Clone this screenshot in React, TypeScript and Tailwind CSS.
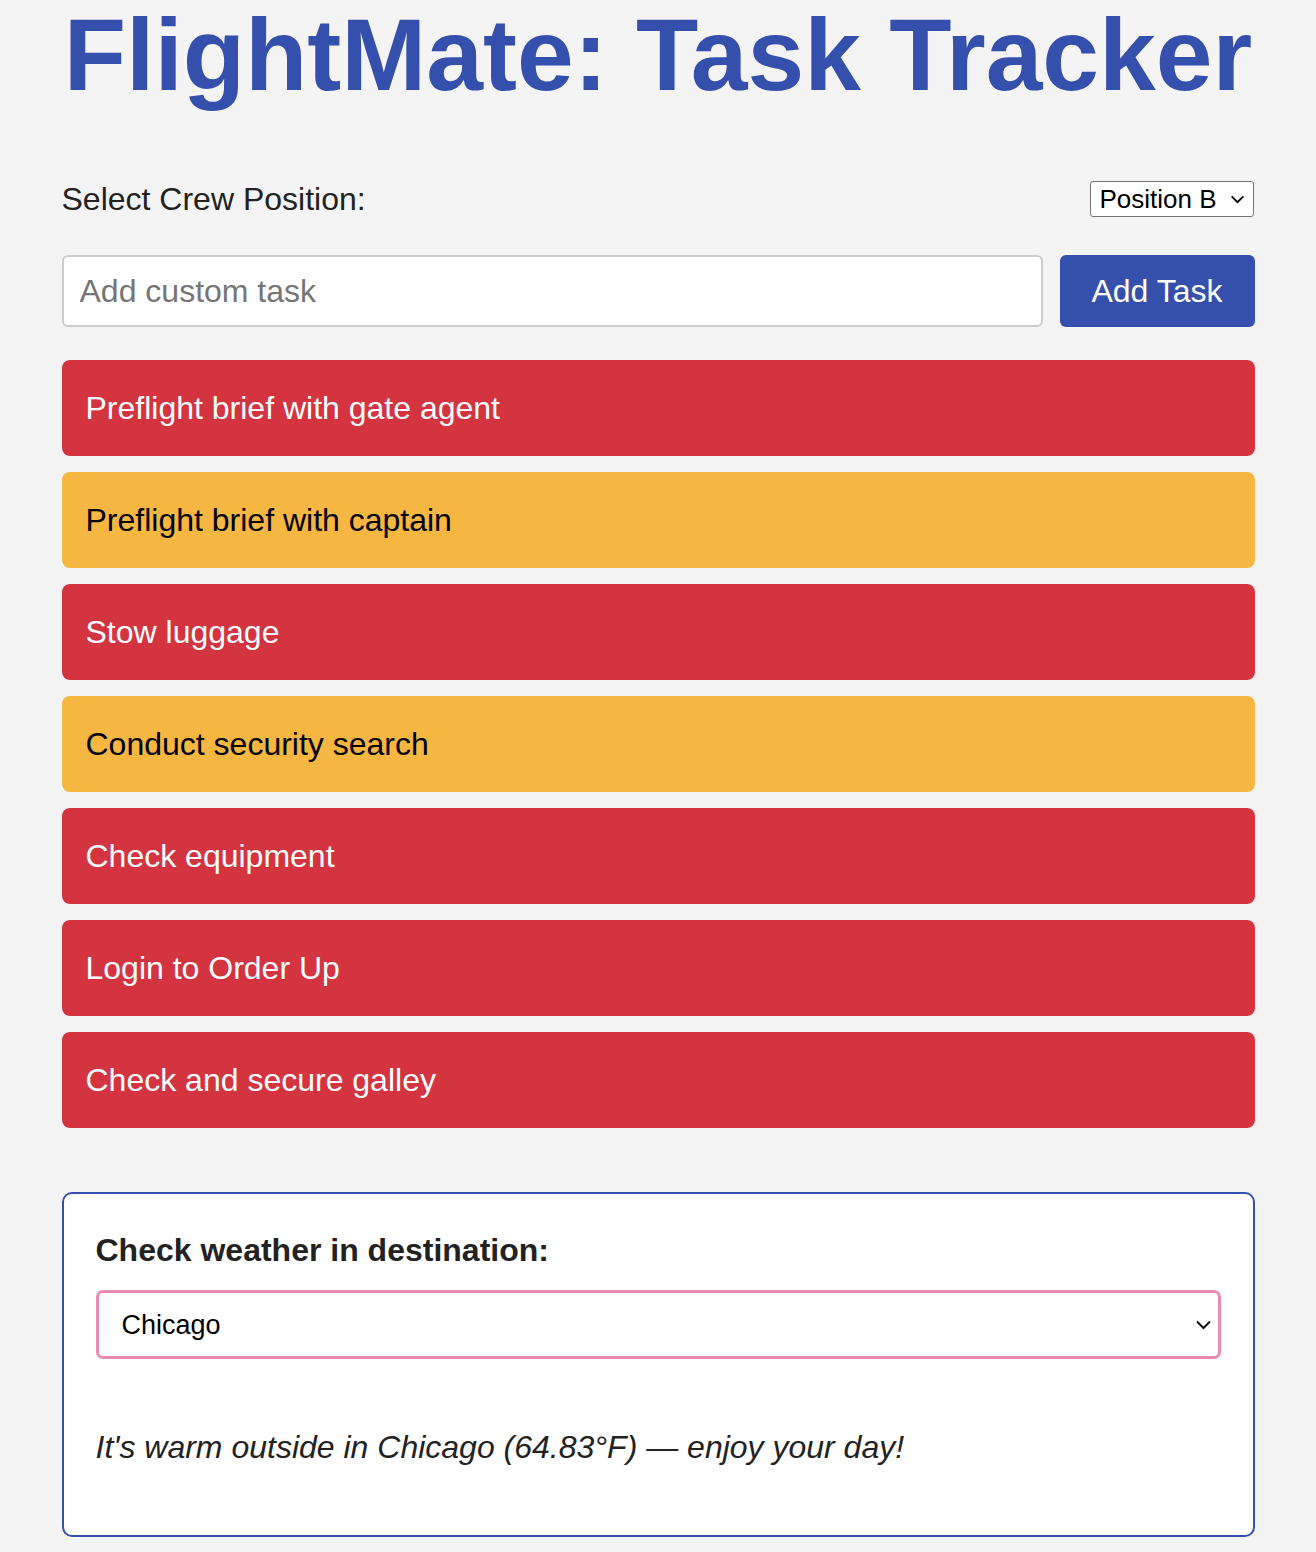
import React, { ChangeEvent, useState } from "react";

interface ITask {
  id: number;
  title: string;
  priority: "high" | "medium";
}

const crewPositions = ["Position A", "Position B", "Position C", "Position D"];

const cities = [
  { name: "Chicago", temp: 64.83 },
  { name: "New York", temp: 58.1 },
  { name: "Denver", temp: 49.3 },
  { name: "Miami", temp: 81.4 },
];

const initialTasks: ITask[] = [
  { id: 1, title: "Preflight brief with gate agent", priority: "high" },
  { id: 2, title: "Preflight brief with captain", priority: "medium" },
  { id: 3, title: "Stow luggage", priority: "high" },
  { id: 4, title: "Conduct security search", priority: "medium" },
  { id: 5, title: "Check equipment", priority: "high" },
  { id: 6, title: "Login to Order Up", priority: "high" },
  { id: 7, title: "Check and secure galley", priority: "high" },
];

const Chevron = ({ className }: { className: string }) => (
  <svg viewBox="0 0 16 10" fill="none" className={className}>
    <path d="M1.5 1.5 8 8l6.5-6.5" stroke="currentColor" strokeWidth="2" />
  </svg>
);

const App = () => {
  const [position, setPosition] = useState("Position B");
  const [city, setCity] = useState("Chicago");
  const [newTask, setNewTask] = useState("");
  const [tasks, setTasks] = useState<ITask[]>(initialTasks);

  const addTask = () => {
    if (!newTask.trim()) return;
    setTasks([...tasks, { id: Date.now(), title: newTask.trim(), priority: "medium" }]);
    setNewTask("");
  };

  const onInputChange = (e: ChangeEvent<HTMLInputElement>) => {
    setNewTask(e.target.value);
  };

  const current = cities.find((c) => c.name === city) ?? cities[0];

  return (
    <div className="min-h-screen bg-[#f4f4f4] font-['Liberation_Sans',Arial,sans-serif] leading-[normal] text-[#222]">
      <div className="mx-auto w-[1193px] pb-[10px]">
        <h1 className="pt-[4px] text-center text-[102px] font-bold leading-none text-[#354fad]">
          FlightMate: Task Tracker
        </h1>

        <div className="mt-[74px] flex h-[37px] items-center justify-between">
          <label className="pt-[2px] text-[32px]">Select Crew Position:</label>
          <div className="relative mr-px">
            <select
              value={position}
              onChange={(e) => setPosition(e.target.value)}
              className="h-[36px] w-[164px] appearance-none rounded-[3px] border border-[#767676] bg-white pl-[9px] text-[26px] leading-none text-black"
            >
              {crewPositions.map((p) => (
                <option key={p}>{p}</option>
              ))}
            </select>
            <Chevron className="pointer-events-none absolute right-[9px] top-[14px] h-[9px] w-[15px] text-black" />
          </div>
        </div>

        <div className="mt-[38px] flex gap-[17px]">
          <input
            type="text"
            value={newTask}
            onChange={onInputChange}
            placeholder="Add custom task"
            className="h-[72px] flex-1 rounded-[6px] border-2 border-[#cccccc] bg-white px-[16px] text-[32px] outline-none placeholder:text-[#757575]"
          />
          <button
            type="button"
            onClick={addTask}
            className="h-[72px] w-[195px] rounded-[6px] bg-[#354fad] text-[32px] text-white"
          >
            Add Task
          </button>
        </div>

        <ul className="mt-[33px] flex flex-col gap-4">
          {tasks.map((task) => (
            <li
              key={task.id}
              className={
                task.priority === "high"
                  ? "flex h-[96px] items-center rounded-lg bg-[#d3343f] px-6 text-[32px] text-white"
                  : "flex h-[96px] items-center rounded-lg bg-[#f5b642] px-6 text-[32px] text-black"
              }
            >
              {task.title}
            </li>
          ))}
        </ul>

        <div className="mt-16 rounded-[10px] border-2 border-[#354fad] bg-white px-8 pt-8 pb-8">
          <h2 className="mt-[6px] text-[32px] font-bold text-[#222]">Check weather in destination:</h2>
          <div className="relative mt-[21px]">
            <select
              value={city}
              onChange={(e) => setCity(e.target.value)}
              className="h-[69px] w-full appearance-none rounded-[7px] border-[3px] border-[#e88bb2] bg-white pl-[23px] text-[27px] text-black outline-none"
            >
              {cities.map((c) => (
                <option key={c.name}>{c.name}</option>
              ))}
            </select>
            <Chevron className="pointer-events-none absolute right-[9px] top-[30px] h-[10px] w-[17px] text-[#111]" />
          </div>
          <p className="mt-[70px] mb-[37px] text-[32px] italic text-[#222]">
            It's warm outside in {current.name} ({current.temp}°F) — enjoy your day!
          </p>
        </div>
      </div>
    </div>
  );
};

export default App;
